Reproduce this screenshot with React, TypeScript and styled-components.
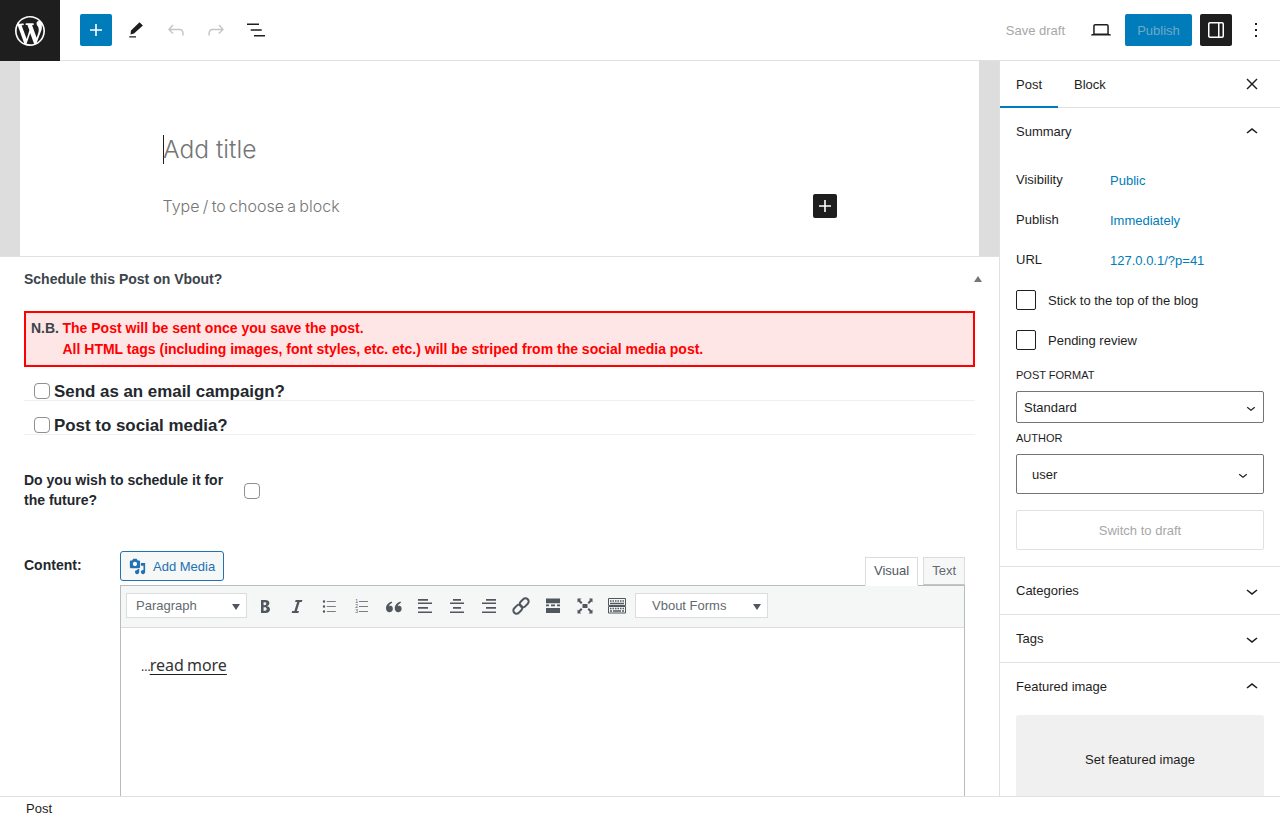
import { FC, ReactNode } from 'react';
import styled, { createGlobalStyle } from 'styled-components';

const Svg: FC<{ size?: number; vb?: string; children: ReactNode }> = ({ size = 24, vb = '0 0 24 24', children }) => (
  <svg width={size} height={size} viewBox={vb} fill="currentColor">
    {children}
  </svg>
);

const Mi: FC<{ children: ReactNode }> = ({ children }) => (
  <Mce>
    <svg width="20" height="20" viewBox="0 0 20 20" fill="currentColor">
      {children}
    </svg>
  </Mce>
);

const App: FC = () => {
  return (
    <Page>
      <GlobalStyle />
      <TopBar>
        <Logo>
          <svg width="30" height="30" viewBox="0 0 20 20" fill="#fff">
            <path d="M20 10c0-5.510-4.490-10-10-10C4.480 0 0 4.490 0 10c0 5.520 4.480 10 10 10 5.510 0 10-4.480 10-10zM7.780 15.370L4.370 6.220c.55-.02 1.170-.08 1.170-.08.500-.06.440-1.130-.06-1.110 0 0-1.450.11-2.370.11-.18 0-.37 0-.58-.01C4.120 2.690 6.890 1.050 10 1.050c2.320 0 4.430.89 6.020 2.340-.68-.11-1.650.39-1.650 1.580 0 .74.45 1.360.9 2.100.35.610.55 1.360.55 2.460 0 1.490-1.400 5-1.400 5l-3.030-8.370c.54-.02.82-.17.82-.17.500-.05.440-1.250-.06-1.220 0 0-1.440.12-2.380.12-.87 0-2.330-.12-2.330-.12-.500-.03-.560 1.200-.06 1.220l.92.08 1.260 3.410zM17.410 10c.24-.64.74-1.870.43-4.250.7 1.290 1.050 2.710 1.050 4.250 0 3.290-1.730 6.240-4.400 7.780.97-2.590 1.940-5.210 2.920-7.780zM6.100 18.090C3.120 16.650 1.110 13.530 1.110 10c0-1.300.23-2.480.72-3.590C3.250 10.300 4.670 14.200 6.100 18.090zm4.030-6.630l2.580 6.980c-.86.290-1.760.45-2.710.45-.79 0-1.570-.11-2.290-.33.810-2.380 1.620-4.740 2.420-7.100z" />
          </svg>
        </Logo>
        <Tools>
          <AddButton>
            <Svg><path d="M18 11.200h-5.200V6h-1.600v5.200H6v1.600h5.200V18h1.600v-5.200H18z" /></Svg>
          </AddButton>
          <ToolButton>
            <Svg><path d="M15.500 4.300l3.400 3.200-8.900 8-3.500 1 .5-4zM5.300 18.300H12v1.100H5.300z" /></Svg>
          </ToolButton>
          <ToolButton $muted>
            <Svg><path d="M18.300 11.700c-.6-.6-1.400-.9-2.300-.9H6.700l2.900-3.300-1.100-1-4.500 5L8.500 16l1-1-2.700-2.700H16c.5 0 .9.200 1.300.5 1 1 1 3.400 1 4.500v.3h1.500v-.2c0-1.500 0-4.300-1.500-5.700z" /></Svg>
          </ToolButton>
          <ToolButton $muted>
            <Svg><path d="M15.600 6.500l-1.100 1 2.900 3.300H8c-.9 0-1.700.3-2.300.9-1.400 1.500-1.400 4.200-1.400 5.600v.2h1.500v-.3c0-1.100 0-3.500 1-4.500.3-.3.700-.5 1.300-.5h9.200L14.300 15l1.100 1.100 4.500-4.600-4.300-5z" /></Svg>
          </ToolButton>
          <ToolButton>
            <Svg><path d="M3 5.500h12V7H3zM6.700 11.300h11v1.500h-11zM10 17h11v1.500H10z" /></Svg>
          </ToolButton>
        </Tools>
        <Actions>
          <SaveDraft>Save draft</SaveDraft>
          <ToolButton>
            <Svg><path d="M20.500 16h-.7V8c0-1.100-.9-2-2-2H6.200c-1.100 0-2 .9-2 2v8h-.7c-.8 0-1.500.7-1.500 1.500h20c0-.8-.7-1.500-1.500-1.500zM5.700 8c0-.3.2-.5.500-.5h11.600c.3 0 .5.200.5.500v7.600H5.700V8z" /></Svg>
          </ToolButton>
          <PublishButton>Publish</PublishButton>
          <DarkToggle>
            <Svg><path d="M18 4H6c-1.100 0-2 .9-2 2v12c0 1.100.9 2 2 2h12c1.100 0 2-.9 2-2V6c0-1.100-.9-2-2-2zm-4 14.500H6c-.3 0-.5-.2-.5-.5V6c0-.3.2-.5.500-.5h8v13zm4.500-.5c0 .3-.2.500-.5.500h-2.500v-13H18c.3 0 .5.200.5.500v12z" /></Svg>
          </DarkToggle>
          <MoreButton>
            <Svg><path d="M13 19h-2v-2h2v2zm0-6h-2v-2h2v2zm0-6h-2V5h2v2z" /></Svg>
          </MoreButton>
        </Actions>
      </TopBar>

      <Body>
        <Main>
          <Canvas>
            <CanvasInner>
              <TitleRow>
                <Caret />
                <Title>Add title</Title>
              </TitleRow>
              <BlockRow>
                <Placeholder>Type / to choose a block</Placeholder>
                <InlineAdd>
                  <Svg><path d="M18 11.200h-5.200V6h-1.600v5.200H6v1.600h5.200V18h1.600v-5.200H18z" /></Svg>
                </InlineAdd>
              </BlockRow>
            </CanvasInner>
          </Canvas>

          <MetaBox>
            <MetaHeader>
              <MetaTitle>Schedule this Post on Vbout?</MetaTitle>
              <CollapseCaret />
            </MetaHeader>
            <Notice>
              <NoticeLabel>N.B.</NoticeLabel>
              <NoticeText>
                The Post will be sent once you save the post.
                <br />
                All HTML tags (including images, font styles, etc. etc.) will be striped from the social media post.
              </NoticeText>
            </Notice>
            <OptionRow>
              <Check />
              <OptionLabel>Send as an email campaign?</OptionLabel>
            </OptionRow>
            <OptionRow>
              <Check />
              <OptionLabel>Post to social media?</OptionLabel>
            </OptionRow>
            <FutureRow>
              <FutureLabel>Do you wish to schedule it for the future?</FutureLabel>
              <FutureCheck />
            </FutureRow>
            <ContentRow>
              <ContentLabel>Content:</ContentLabel>
              <EditorColumn>
                <EditorTop>
                  <MediaButton>
                    <svg width="17" height="17" viewBox="0 0 20 20" fill="#2271b1">
                      <path d="M13 11V4c0-.55-.45-1-1-1h-1.670L9 1H5L3.670 3H2c-.55 0-1 .45-1 1v7c0 .55.45 1 1 1h10c.55 0 1-.45 1-1zM7 4.500c1.380 0 2.500 1.120 2.500 2.500S8.380 9.500 7 9.500 4.500 8.380 4.500 7 5.620 4.500 7 4.500zM14 6h5v10.500c0 1.380-1.120 2.500-2.500 2.500S14 17.880 14 16.500s1.120-2.500 2.500-2.500c.17 0 .34.020.5.050V9h-3V6zm-4 8.050V13h2v3.500c0 1.380-1.120 2.500-2.500 2.500S7 17.880 7 16.500 8.120 14 9.500 14c.17 0 .34.020.5.050z" />
                    </svg>
                    Add Media
                  </MediaButton>
                  <EditorTabs>
                    <EditorTab $active>Visual</EditorTab>
                    <EditorTab>Text</EditorTab>
                  </EditorTabs>
                </EditorTop>
                <Editor>
                  <EditorToolbar>
                    <FormatSelect>
                      Paragraph
                      <SmallCaret />
                    </FormatSelect>
                    <Mi><path d="M6 4v13h4.540c1.370 0 2.460-.330 3.260-1 .800-.660 1.200-1.580 1.200-2.750 0-.840-.280-1.540-.830-2.100-.560-.560-1.290-.880-2.170-.960v-.080c.690-.130 1.250-.470 1.690-1.010.440-.550.660-1.170.660-1.860 0-1.060-.370-1.880-1.110-2.430C12.500 4.270 11.470 4 10.160 4H6zm2.570 5.150V6.170h.900c.640 0 1.110.120 1.400.340.290.230.440.590.440 1.100 0 .520-.160.910-.470 1.160-.300.250-.770.380-1.390.380h-.880zm0 5.680v-3.540h1.040c.680 0 1.190.150 1.530.44.350.290.520.740.520 1.340 0 1.180-.700 1.760-2.090 1.760h-1z" /></Mi>
                    <Mi><path d="M14.780 6h-2.130l-2.800 9h2.120l-.620 2H4.600l.620-2h2.140l2.810-9H8.060l.620-2h6.720z" /></Mi>
                    <Mi><path d="M5 4.300a1.200 1.200 0 1 1 0 2.400 1.200 1.200 0 0 1 0-2.400zm0 5a1.200 1.200 0 1 1 0 2.400 1.200 1.200 0 0 1 0-2.400zm0 5a1.200 1.200 0 1 1 0 2.400 1.200 1.200 0 0 1 0-2.400zM7.800 5h9v.8h-9zm0 5h9v.8h-9zm0 5h9v.8h-9z" /></Mi>
                    <Mi><path d="M8 5h9v.8H8zm0 5h9v.8H8zm0 5h9v.8H8z" /><MceNumber x="4.200" y="7">1</MceNumber><MceNumber x="4.200" y="12">2</MceNumber><MceNumber x="4.200" y="17">3</MceNumber></Mi>
                    <Mi>
                      <g transform="translate(-2.400 .58) scale(1.200)">
                        <path d="M9.200 4.100l.5 1c-1.400.7-2.500 1.500-2.700 2.900.9-.6 2.700-.4 3.100 1.400.4 1.600-.4 3.700-2.600 3.700-2 0-3-1.600-3-3.300 0-2.800 2.100-5 4.700-5.700zm7.300 0l.5 1c-1.400.7-2.500 1.500-2.700 2.900.9-.6 2.700-.4 3.100 1.400.4 1.600-.4 3.700-2.600 3.700-2 0-3-1.600-3-3.300 0-2.800 2.100-5 4.700-5.700z" />
                      </g>
                    </Mi>
                    <Mi><path d="M3 3h10v1.700H3zm0 3.400h14v1.700H3zM3 11h10v1.700H3zm0 4.400h14v1.700H3z" /></Mi>
                    <Mi><path d="M6 3h8v1.700H6zM3 6.400h14v1.700H3zM6 11h8v1.700H6zm-3 4.400h14v1.700H3z" /></Mi>
                    <Mi><path d="M7 3h10v1.700H7zM3 6.400h14v1.700H3zM7 11h10v1.700H7zm-4 4.400h14v1.700H3z" /></Mi>
                    <Mi>
                      <g transform="rotate(-45 10 10)" fill="none" stroke="currentColor" strokeWidth="2">
                        <rect x="0.500" y="6.800" width="10" height="6.400" rx="3.200" />
                        <rect x="9.500" y="6.800" width="10" height="6.400" rx="3.200" />
                      </g>
                    </Mi>
                    <Mi><path d="M3 2.500h14v4.800H3zm0 6h3v1.800H3zm5 0h4v1.800H8zm6 0h3v1.800h-3zM3 12h14v5H3z" /></Mi>
                    <Mi><path d="M7.500 8h5v4h-5zM2.500 2.500h4L5 4l2.500 2.500L6 8 3.500 5.500 2.500 6.500zm15 0v4l-1-1L14 8l-1.500-1.500L15 4l-1-1.500zm-15 15v-4l1 1L6 12l1.500 1.500L5 16l1 1.500zm15 0h-4l1.500-1.500-2.500-2.500L14 12l2.500 2.500 1-1z" /></Mi>
                    <Mi>
                      <g fill="none" stroke="currentColor">
                        <path d="M1.500 2.500h17v7h-17zM1.500 10.500h17v6.500h-17z" />
                        <path d="M3 5h1.500M5.500 5H7M8 5h1.500M10.500 5H12M13 5h1.500M15.500 5H17M3 7.500h14M3 12.500h1.500M5.500 12.500H7M8 12.500h1.500M10.500 12.500H12M13 12.500h1.500M15.500 12.500H17M3 15h2M6 15h8M15 15h2" strokeWidth="1.300" />
                      </g>
                    </Mi>
                    <FormsSelect>
                      Vbout Forms
                      <SmallCaret />
                    </FormsSelect>
                  </EditorToolbar>
                  <EditorBody>
                    <Ellipsis>...</Ellipsis>
                    <ReadMore>read more</ReadMore>
                  </EditorBody>
                </Editor>
              </EditorColumn>
            </ContentRow>
          </MetaBox>
        </Main>

        <Sidebar>
          <TabBar>
            <SideTab $active>Post</SideTab>
            <SideTab>Block</SideTab>
            <CloseButton>
              <Svg><path d="M17.500 7.500l-1-1L12 11 7.500 6.500l-1 1L11 12l-4.500 4.500 1 1L12 13l4.500 4.500 1-1L13 12z" /></Svg>
            </CloseButton>
          </TabBar>
          <Panel>
            <PanelHeader>
              Summary
              <ChevronUp />
            </PanelHeader>
            <SummaryBody>
              <InfoRow>
                <InfoLabel>Visibility</InfoLabel>
                <InfoLink>Public</InfoLink>
              </InfoRow>
              <InfoRow>
                <InfoLabel>Publish</InfoLabel>
                <InfoLink>Immediately</InfoLink>
              </InfoRow>
              <InfoRow>
                <InfoLabel>URL</InfoLabel>
                <InfoLink>127.0.0.1/?p=41</InfoLink>
              </InfoRow>
              <CheckRow>
                <SideCheck />
                Stick to the top of the blog
              </CheckRow>
              <CheckRow>
                <SideCheck />
                Pending review
              </CheckRow>
              <FieldLabel>POST FORMAT</FieldLabel>
              <SelectBox>
                Standard
                <ChevronDownSmall />
              </SelectBox>
              <FieldLabel>AUTHOR</FieldLabel>
              <AuthorBox>
                user
                <ChevronDownSmall />
              </AuthorBox>
              <SwitchDraft>Switch to draft</SwitchDraft>
            </SummaryBody>
          </Panel>
          <Panel>
            <PanelHeader>
              Categories
              <ChevronDown />
            </PanelHeader>
          </Panel>
          <Panel>
            <PanelHeader>
              Tags
              <ChevronDown />
            </PanelHeader>
          </Panel>
          <Panel>
            <PanelHeader>
              Featured image
              <ChevronUp />
            </PanelHeader>
            <FeaturedBody>
              <FeaturedBox>Set featured image</FeaturedBox>
            </FeaturedBody>
          </Panel>
        </Sidebar>
      </Body>

      <Footer>Post</Footer>
    </Page>
  );
};

const ChevronUp: FC = () => (
  <ChevronSlot>
    <Svg><path d="M6.500 12.400L12 8l5.500 4.400-.9 1.200L12 10l-4.500 3.600-1-1.200z" /></Svg>
  </ChevronSlot>
);

const ChevronDown: FC = () => (
  <ChevronSlot>
    <Svg><path d="M17.500 11.600L12 16l-5.500-4.400.9-1.200L12 14l4.500-3.600 1 1.200z" /></Svg>
  </ChevronSlot>
);

const ChevronDownSmall: FC = () => (
  <SmallChevron>
    <Svg size={18}><path d="M17.500 11.600L12 16l-5.500-4.400.9-1.200L12 14l4.500-3.600 1 1.200z" /></Svg>
  </SmallChevron>
);

// Styles
const GlobalStyle = createGlobalStyle`
  html, body {
    margin: 0;
    padding: 0;
    height: 100%;
    overflow: hidden;
    background: #fff;
  }
  * {
    box-sizing: border-box;
  }
`;

const Page = styled.div`
  width: 1280px;
  height: 821px;
  display: flex;
  flex-direction: column;
  font-family: 'Liberation Sans', Arial, sans-serif;
  font-size: 13px;
  color: #1e1e1e;
  overflow: hidden;
`;

const TopBar = styled.header`
  height: 61px;
  flex: none;
  display: flex;
  align-items: center;
  border-bottom: 1px solid #e0e0e0;
  background: #fff;
`;

const Logo = styled.div`
  width: 60px;
  height: 61px;
  margin-bottom: -1px;
  background: #1e1e1e;
  display: flex;
  align-items: center;
  justify-content: center;
  flex: none;
`;

const Tools = styled.div`
  display: flex;
  align-items: center;
  gap: 8px;
  padding-left: 20px;
`;

const ToolButton = styled.div<{ $muted?: boolean }>`
  width: 32px;
  height: 32px;
  display: flex;
  align-items: center;
  justify-content: center;
  color: ${(p) => (p.$muted ? '#c6c6c6' : '#1e1e1e')};
`;

const AddButton = styled(ToolButton)`
  background: #007cba;
  color: #fff;
  border-radius: 2px;
`;

const Actions = styled.div`
  margin-left: auto;
  display: flex;
  align-items: center;
  padding-right: 8px;
`;

const SaveDraft = styled.div`
  color: #a7a7a7;
  font-size: 13px;
  margin-right: 20px;
`;

const PublishButton = styled.div`
  width: 67px;
  height: 32px;
  margin-left: 8px;
  background: #007cba;
  color: #6fa9c9;
  border-radius: 2px;
  display: flex;
  align-items: center;
  justify-content: center;
`;

const DarkToggle = styled(ToolButton)`
  margin-left: 8px;
  background: #1e1e1e;
  color: #fff;
  border-radius: 2px;
`;

const MoreButton = styled(ToolButton)`
  margin-left: 8px;
`;

const Body = styled.div`
  flex: 1;
  min-height: 0;
  display: flex;
`;

const Main = styled.main`
  flex: 1;
  min-width: 0;
  overflow: hidden;
  border-right: 1px solid #e0e0e0;
`;

const Canvas = styled.div`
  height: 196px;
  padding: 0 20px;
  background: #ddd;
  border-bottom: 1px solid #e0e0e0;
`;

const CanvasInner = styled.div`
  height: 195px;
  background: #fff;
  padding: 71px 0 0 143px;
`;

const TitleRow = styled.div`
  height: 34px;
  display: flex;
  align-items: center;
`;

const Caret = styled.span`
  width: 1px;
  height: 29px;
  background: #1e1e1e;
`;

const Title = styled.div`
  margin-left: -1px;
  font-family: 'Inter', sans-serif;
  font-weight: 300;
  font-size: 24.6px;
  color: #757575;
`;

const BlockRow = styled.div`
  display: flex;
  align-items: center;
  justify-content: space-between;
  width: 674px;
  height: 24px;
  margin-top: 28px;
`;

const Placeholder = styled.div`
  margin-left: -0.5px;
  font-family: 'Inter', sans-serif;
  font-weight: 300;
  font-size: 16px;
  word-spacing: -1.2px;
  color: #757575;
`;

const InlineAdd = styled.div`
  width: 24px;
  height: 24px;
  background: #1e1e1e;
  color: #fff;
  border-radius: 2px;
  display: flex;
  align-items: center;
  justify-content: center;
`;

const MetaBox = styled.section`
  padding: 0 24px;
`;

const MetaHeader = styled.div`
  height: 44px;
  display: flex;
  align-items: center;
  justify-content: space-between;
`;

const MetaTitle = styled.div`
  font-size: 14px;
  font-weight: 700;
  color: #3c434a;
`;

const CollapseCaret = styled.span`
  width: 0;
  height: 0;
  margin-right: -7px;
  border-left: 4px solid transparent;
  border-right: 4px solid transparent;
  border-bottom: 6px solid #72777c;
`;

const Notice = styled.div`
  margin-top: 10px;
  height: 56px;
  width: 951px;
  border: 2px solid #f00;
  background: #ffe6e6;
  padding: 5px;
  display: flex;
  gap: 3.5px;
  font-size: 14px;
  line-height: 21px;
  font-weight: 700;
`;

const NoticeLabel = styled.span`
  color: #3c434a;
`;

const NoticeText = styled.span`
  color: #f00;
`;

const OptionRow = styled.label`
  width: 951px;
  height: 34px;
  padding: 14px 0 0 10px;
  display: flex;
  align-items: flex-start;
  gap: 4px;
  border-bottom: 1px solid #f0f0f1;
`;

const Check = styled.span`
  width: 16px;
  height: 16px;
  margin-top: 2px;
  flex: none;
  border: 1px solid #8c8f94;
  border-radius: 4px;
  background: #fff;
`;

const FutureCheck = styled(Check)`
  margin-top: 0;
`;

const OptionLabel = styled.span`
  font-size: 16.9px;
  line-height: 21px;
  font-weight: 700;
  color: #23282d;
`;

const FutureRow = styled.div`
  margin-top: 36px;
  display: flex;
  align-items: center;
  gap: 20px;
`;

const FutureLabel = styled.div`
  width: 200px;
  font-size: 14px;
  line-height: 19.6px;
  font-weight: 700;
  color: #23282d;
`;

const ContentRow = styled.div`
  margin-top: 41px;
  display: flex;
`;

const ContentLabel = styled.div`
  width: 96px;
  padding-top: 5px;
  font-size: 14px;
  line-height: 18px;
  font-weight: 700;
  color: #23282d;
`;

const EditorColumn = styled.div`
  width: 845px;
  flex: none;
`;

const EditorTop = styled.div`
  height: 34px;
  display: flex;
  align-items: flex-start;
  justify-content: space-between;
`;

const MediaButton = styled.div`
  width: 104px;
  height: 30px;
  border: 1px solid #2271b1;
  border-radius: 3px;
  background: #f6f7f7;
  color: #2271b1;
  display: flex;
  align-items: center;
  gap: 7px;
  padding-left: 8px;
`;

const EditorTabs = styled.div`
  display: flex;
  align-items: flex-start;
  gap: 5px;
  padding-top: 6px;
`;

const EditorTab = styled.div<{ $active?: boolean }>`
  height: ${(p) => (p.$active ? '29px' : '28px')};
  padding: 0 8px 2px;
  display: flex;
  align-items: center;
  border: 1px solid #dcdcde;
  border-bottom: ${(p) => (p.$active ? '1px solid #fff' : '1px solid #c3c4c7')};
  background: ${(p) => (p.$active ? '#fff' : '#f6f7f7')};
  color: ${(p) => (p.$active ? '#50575e' : '#646970')};
  position: relative;
  z-index: 1;
`;

const Editor = styled.div`
  border: 1px solid #b9bcbe;
  height: 300px;
`;

const EditorToolbar = styled.div`
  height: 42px;
  padding: 7px 5px 0;
  background: #f5f6f6;
  border-bottom: 1px solid #dcdcde;
  box-shadow: 0 1px 0 #e5e5e5;
  display: flex;
  align-items: flex-start;
  color: #50575e;
`;

const FormatSelect = styled.div`
  position: relative;
  width: 121px;
  height: 25px;
  margin-right: 2px;
  background: #fff;
  border: 1px solid #dcdcde;
  padding-left: 9px;
  display: flex;
  align-items: center;
  color: #646970;
`;

const FormsSelect = styled(FormatSelect)`
  width: 133px;
  padding-left: 16px;
  margin: 0 0 0 2px;
`;

const SmallCaret = styled.span`
  position: absolute;
  right: 6px;
  top: 10px;
  width: 0;
  height: 0;
  border-left: 4px solid transparent;
  border-right: 4px solid transparent;
  border-top: 6px solid #50575e;
`;

const Mce = styled.div`
  width: 32px;
  height: 25px;
  display: flex;
  align-items: center;
  justify-content: center;
`;

const MceNumber = styled.text`
  font-family: 'Liberation Sans', sans-serif;
  font-size: 5px;
`;

const EditorBody = styled.div`
  padding: 25px 20px;
  font-family: 'Noto Sans', sans-serif;
  font-size: 16px;
  line-height: 24px;
  word-spacing: -1px;
  background: #fff;
  color: #333;
`;

const Ellipsis = styled.span`
  font-size: 12px;
  margin-right: -1px;
`;

const ReadMore = styled.span`
  text-decoration: underline;
  text-decoration-color: #1e1e1e;
  text-decoration-thickness: 1px;
  text-underline-offset: 3px;
`;

const Sidebar = styled.aside`
  width: 280px;
  flex: none;
  overflow: hidden;
  background: #fff;
`;

const TabBar = styled.div`
  height: 47px;
  display: flex;
  align-items: stretch;
  border-bottom: 1px solid #e0e0e0;
`;

const SideTab = styled.div<{ $active?: boolean }>`
  padding: 0 16px;
  display: flex;
  align-items: center;
  margin-bottom: -1px;
  height: 47px;
  color: #1e1e1e;
  box-shadow: ${(p) => (p.$active ? 'inset 0 -2px 0 #007cba' : 'none')};
`;

const CloseButton = styled(ToolButton)`
  margin: 7px 12px 0 auto;
`;

const Panel = styled.div`
  border-bottom: 1px solid #e0e0e0;
`;

const PanelHeader = styled.div`
  height: 47px;
  padding: 0 16px;
  display: flex;
  align-items: center;
  justify-content: space-between;
  color: #1e1e1e;
`;

const ChevronSlot = styled.span`
  display: flex;
`;

const SmallChevron = styled.span`
  position: absolute;
  right: 3px;
  top: 50%;
  margin-top: -8px;
  display: flex;
`;

const SummaryBody = styled.div`
  padding: 5px 16px 16px;
  height: 411px;
`;

const InfoRow = styled.div`
  height: 40px;
  display: flex;
  align-items: center;
`;

const InfoLabel = styled.div`
  width: 94px;
  padding-bottom: 2px;
`;

const InfoLink = styled.div`
  color: #007cba;
`;

const CheckRow = styled.div`
  height: 40px;
  display: flex;
  align-items: center;
  gap: 12px;
`;

const SideCheck = styled.span`
  width: 20px;
  height: 20px;
  border: 1px solid #1e1e1e;
  border-radius: 2px;
`;

const FieldLabel = styled.div`
  margin-top: 7px;
  font-size: 11px;
  line-height: 16px;
  color: #1e1e1e;
`;

const SelectBox = styled.div`
  position: relative;
  margin-top: 8px;
  height: 32px;
  padding-left: 7px;
  border: 1px solid #757575;
  border-radius: 2px;
  display: flex;
  align-items: center;
`;

const AuthorBox = styled(SelectBox)`
  height: 40px;
  padding-left: 15px;

  ${SmallChevron} {
    right: 11px;
  }
`;

const SwitchDraft = styled.div`
  margin-top: 16px;
  height: 40px;
  border: 1px solid #e0e0e0;
  border-radius: 2px;
  color: #a7a7a7;
  display: flex;
  align-items: center;
  justify-content: center;
`;

const FeaturedBody = styled.div`
  padding: 5px 16px 16px;
`;

const FeaturedBox = styled.div`
  height: 88px;
  background: #f0f0f0;
  border-radius: 2px;
  display: flex;
  align-items: center;
  justify-content: center;
`;

const Footer = styled.footer`
  height: 25px;
  flex: none;
  padding: 0 0 2px 26px;
  display: flex;
  align-items: center;
  background: #fff;
  border-top: 1px solid #e0e0e0;
`;

export default App;
